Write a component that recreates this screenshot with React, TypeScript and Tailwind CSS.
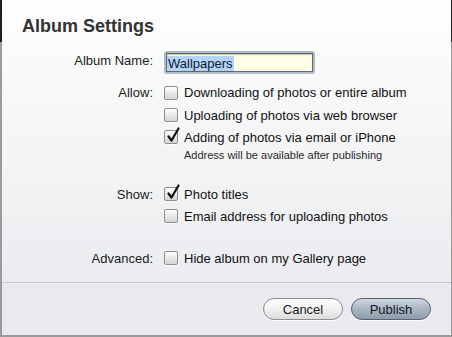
import React, { useState } from "react";

type CheckProps = {
  checked: boolean;
  onToggle: () => void;
};

const Checkbox: React.FC<CheckProps> = ({ checked, onToggle }) => (
  <button
    type="button"
    onClick={onToggle}
    className="relative h-[14px] w-[14px] shrink-0 rounded-[2px] border border-[#8e8e8e] bg-[linear-gradient(to_bottom,#ffffff,#e4e4e4_60%,#d6d6d6)] shadow-[0_1px_0_rgba(255,255,255,0.8)]"
  >
    {checked && (
      <svg
        className="absolute left-[1px] top-[-4px] overflow-visible"
        width="14"
        height="16"
        viewBox="0 0 14 16"
      >
        <path
          d="M2.5 9.5 L5.5 13.5 L12.5 1.5"
          fill="none"
          stroke="#111"
          strokeWidth="2.2"
          strokeLinecap="round"
          strokeLinejoin="round"
        />
      </svg>
    )}
  </button>
);

const Row: React.FC<{ label?: string; className?: string; children: React.ReactNode }> = ({
  label,
  className = "",
  children,
}) => (
  <div className={`flex items-center ${className}`}>
    <div className="w-[152px] shrink-0 pr-[1px] text-right text-[#1a1a1a]">{label}</div>
    <div className="ml-[10px] flex items-center">{children}</div>
  </div>
);

export default function App() {
  const [opts, setOpts] = useState({
    download: false,
    upload: false,
    email: true,
    titles: true,
    emailAddr: false,
    hide: false,
  });

  const toggle = (k: keyof typeof opts) => setOpts({ ...opts, [k]: !opts[k] });

  const option = (k: keyof typeof opts, text: string) => (
    <>
      <Checkbox checked={opts[k]} onToggle={() => toggle(k)} />
      <span className="ml-[6px] text-[#111]">{text}</span>
    </>
  );

  return (
    <div
      className="h-[337px] w-[452px] bg-[linear-gradient(to_bottom,#1e1e1e_42px,#9b9b9b_42px)] pb-[2px] pl-[2px] pr-[1px] text-[13px] leading-[15px]"
      style={{ fontFamily: '"Liberation Sans", Arial, sans-serif' }}
    >
      <div className="flex h-full flex-col">
        {/* form area */}
        <div className="flex flex-1 flex-col bg-[linear-gradient(to_bottom,#fefefe,#ebecef)]">
          <h1 className="mt-[15px] pl-[20px] text-[18px] font-bold leading-[22px] text-[#333]">
            Album Settings
          </h1>

          <Row label="Album Name:" className="mt-[14px] h-[23px] [&>div:first-child]:-mt-[4px]">
            <div className="h-[23px] w-[151px] rounded-[3px] bg-[#b3bcc6] p-[2px]">
              <div className="flex h-full items-center border border-[#62676d] bg-[#fffee6] pt-[2px] shadow-[inset_0_1px_1px_rgba(0,0,0,0.25)]">
                <span className="bg-[#b5d3f7] px-[1px] text-[#0b1a33]">Wallpapers</span>
              </div>
            </div>
          </Row>

          <Row label="Allow:" className="mt-[7px] h-[23px]">
            {option("download", "Downloading of photos or entire album")}
          </Row>
          <Row className="h-[22px]">{option("upload", "Uploading of photos via web browser")}</Row>
          <Row className="h-[22px]">{option("email", "Adding of photos via email or iPhone")}</Row>
          <div className="ml-[182px] h-[14px] text-[11px] leading-[14px] text-[#2a2a2a]">
            Address will be available after publishing
          </div>

          <Row label="Show:" className="mt-[21px] h-[22px]">
            {option("titles", "Photo titles")}
          </Row>
          <Row className="h-[22px]">{option("emailAddr", "Email address for uploading photos")}</Row>

          <Row label="Advanced:" className="mt-[20px] h-[22px]">
            {option("hide", "Hide album on my Gallery page")}
          </Row>
        </div>

        {/* footer */}
        <div className="h-[1px] bg-[#c8c9cd]" />
        <div className="flex h-[52px] items-center justify-end gap-[8px] bg-[#e9eaee] pr-[20px]">
          <button
            type="button"
            className="h-[22px] w-[80px] rounded-full border border-[#8d8d8d] bg-[linear-gradient(to_bottom,#ffffff,#f1f1f1_50%,#dcdcdc)] text-[13px] text-[#1a1a1a] shadow-[0_1px_0_rgba(255,255,255,0.9)]"
          >
            Cancel
          </button>
          <button
            type="button"
            className="h-[22px] w-[80px] rounded-full border border-[#58626e] bg-[linear-gradient(to_bottom,#d0d8e1,#a9b5c2_50%,#8e9cab)] text-[13px] text-[#141a22] shadow-[0_1px_0_rgba(255,255,255,0.9)]"
          >
            Publish
          </button>
        </div>
      </div>
    </div>
  );
}
